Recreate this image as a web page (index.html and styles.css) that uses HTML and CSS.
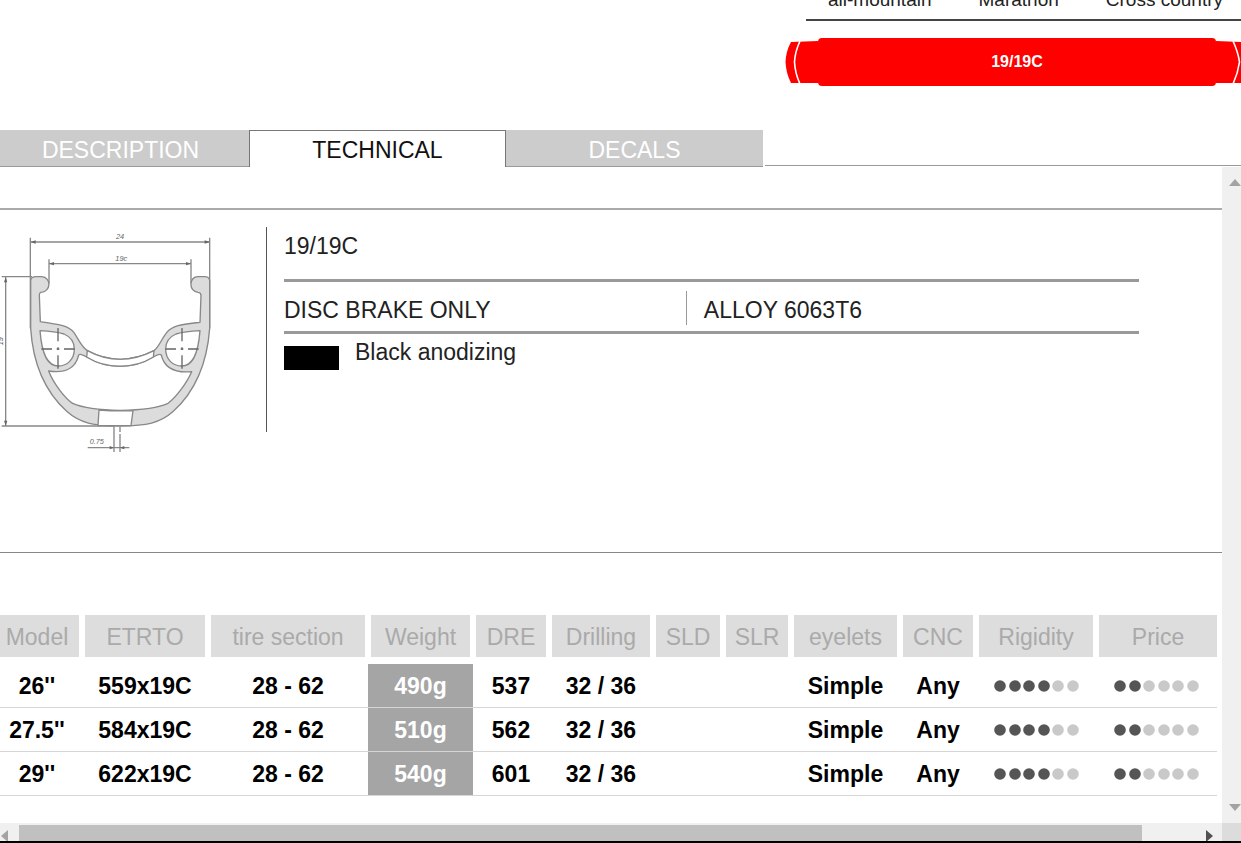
FILE: index.html
```html
<!DOCTYPE html>
<html lang="en">

<head>
    <meta charset="UTF-8">
    <meta name="viewport" content="width=device-width, initial-scale=1.0">
    <title>19/19C</title>
    <link rel="stylesheet" href="styles.css">
</head>

<body>
    <svg class="defs" width="0" height="0">
        <symbol id="score4" viewBox="0 0 85 12">
            <g fill="#555">
                <circle cx="6" cy="6" r="5.8" /><circle cx="21" cy="6" r="5.8" />
                <circle cx="35" cy="6" r="5.8" /><circle cx="50" cy="6" r="5.8" />
            </g>
            <g fill="#c9c9c9">
                <circle cx="64" cy="6" r="5.8" /><circle cx="79" cy="6" r="5.8" />
            </g>
        </symbol>
        <symbol id="score2" viewBox="0 0 85 12">
            <g fill="#555">
                <circle cx="6" cy="6" r="5.8" /><circle cx="21" cy="6" r="5.8" />
            </g>
            <g fill="#c9c9c9">
                <circle cx="35" cy="6" r="5.8" /><circle cx="50" cy="6" r="5.8" />
                <circle cx="64" cy="6" r="5.8" /><circle cx="79" cy="6" r="5.8" />
            </g>
        </symbol>
    </svg>

    <header class="header">
        <div class="usage">
            <div class="usage-labels">
                <span>all-mountain</span>
                <span>Marathon</span>
                <span>Cross country</span>
            </div>
            <div class="range">
                <svg class="range-end" width="33" height="43" viewBox="0 0 33 43">
                    <path d="M6 1L33 0V42L6 42Q1 32 0.500 21Q1 10 6 1Z" fill="#f00" />
                    <path d="M15 0Q10 11 9.500 21Q10 32 15 43" fill="none" stroke="#fff" stroke-width="1.6" />
                </svg>
                <div class="range-name">19/19C</div>
                <svg class="range-end" width="25" height="43" viewBox="0 0 25 43">
                    <path d="M0 0L25 1V42H0Z" fill="#f00" />
                    <path d="M17 0Q22 11 23.500 21Q22 32 17 43" fill="none" stroke="#fff" stroke-width="1.6" />
                </svg>
            </div>
        </div>
    </header>

    <nav class="tabs">
        <button class="tab">DESCRIPTION</button>
        <button class="tab active">TECHNICAL</button>
        <button class="tab">DECALS</button>
        <span class="tabs-line"></span>
    </nav>

    <main class="panel">
        <div class="panel-row">
            <div class="content">
                <section class="rim">
                    <svg class="rim-drawing" width="240" height="240" viewBox="0 3 720 720">
                        <!-- rim profile -->
                        <path fill="#dcdcdc" stroke="#888" stroke-width="4" stroke-linejoin="round" fill-rule="evenodd"
                            d="M92 180Q94 170 108 170H125C155 172 154 216 122 217Q118 218 118 226L121 305C170 313 205 315 222 338C240 365 244 380 262 392C325 426 395 426 462 392C478 380 482 360 500 338C518 315 550 313 600 307L603 226Q602 217 594 217C566 214 566 172 592 170H614Q628 170 629 182V325C622 420 590 510 520 574C480 610 440 617 360 618C280 617 240 610 200 574C130 510 98 420 92 325Z
                            M120 332Q165 334 192 342C215 352 223 368 223 387C223 418 202 438 175 438C145 438 126 410 120 332Z
                            M600 332Q555 334 528 342C505 352 497 368 497 387C497 418 518 438 545 438C575 438 594 410 600 332Z
                            M146 453C160 490 196 536 218 550C250 564 300 570 360 571C420 570 475 564 504 550C526 534 560 490 575 455C520 460 492 440 484 405Q478 399 460 411C400 448 320 448 260 411Q240 399 236 405C228 440 200 462 146 453Z" />
                        <path fill="#fff" stroke="#888" stroke-width="4" d="M262 392C325 426 395 426 462 392L460 411C400 448 320 448 260 411ZM297 570Q350 574 399 572L393 617H294Z" />
                        <!-- spoke centres -->
                        <g stroke="#666" stroke-width="4" fill="none">
                            <path d="M174 324V364M174 382V390M174 406V446M124 387H156M170 387H178M192 387H224" />
                            <path d="M546 324V364M546 382V390M546 406V446M496 387H528M542 387H550M564 387H596" />
                        </g>
                        <!-- dimension lines -->
                        <g stroke="#888" stroke-width="4" fill="none">
                            <path d="M91 53V325M629 53V325M147 118V190M573 118V190" />
                            <path d="M92 66H629M147 131H573M17 172V617M5 170H96M5 618H345" />
                            <path d="M342 620V696M360 620V636M360 642V696M263 683H388" />
                        </g>
                        <g fill="#666">
                            <path d="M92 66l15-5v10zM629 66l-15-5v10zM147 131l15-5v10zM573 131l-15-5v10zM17 172l-5 15h10zM17 617l-5-15h10zM342 683l-13-5v10zM360 683l13-5v10z" />
                        </g>
                        <g class="dimension">
                            <text x="348" y="57">24</text>
                            <text x="346" y="122">19c</text>
                            <text x="269" y="672">0.75</text>
                            <text x="8" y="376" transform="rotate(-90 8 376)">19</text>
                        </g>
                    </svg>
                    <div class="specs">
                        <h1 class="spec-name">19/19C</h1>
                        <div class="spec-pair">
                            <span class="spec-brake">DISC BRAKE ONLY</span>
                            <span class="spec-alloy">ALLOY 6063T6</span>
                        </div>
                        <div class="finish">
                            <span class="swatch"></span>
                            <span>Black anodizing</span>
                        </div>
                    </div>
                </section>

                <table class="models">
                    <colgroup>
                        <col class="col-model">
                        <col class="col-etrto">
                        <col class="col-tire">
                        <col class="col-weight">
                        <col class="col-dre">
                        <col class="col-drilling">
                        <col class="col-sld">
                        <col class="col-slr">
                        <col class="col-eyelets">
                        <col class="col-cnc">
                        <col class="col-rigidity">
                        <col class="col-price">
                    </colgroup>
                    <thead>
                        <tr>
                            <th>Model</th>
                            <th>ETRTO</th>
                            <th>tire section</th>
                            <th>Weight</th>
                            <th>DRE</th>
                            <th>Drilling</th>
                            <th>SLD</th>
                            <th>SLR</th>
                            <th>eyelets</th>
                            <th>CNC</th>
                            <th>Rigidity</th>
                            <th>Price</th>
                        </tr>
                    </thead>
                    <tbody>
                        <tr>
                            <td>26''</td>
                            <td>559x19C</td>
                            <td>28 - 62</td>
                            <td class="weight">490g</td>
                            <td>537</td>
                            <td>32 / 36</td>
                            <td></td>
                            <td></td>
                            <td>Simple</td>
                            <td>Any</td>
                            <td><svg class="score"><use href="#score4" /></svg></td>
                            <td><svg class="score"><use href="#score2" /></svg></td>
                        </tr>
                        <tr>
                            <td>27.5''</td>
                            <td>584x19C</td>
                            <td>28 - 62</td>
                            <td class="weight">510g</td>
                            <td>562</td>
                            <td>32 / 36</td>
                            <td></td>
                            <td></td>
                            <td>Simple</td>
                            <td>Any</td>
                            <td><svg class="score"><use href="#score4" /></svg></td>
                            <td><svg class="score"><use href="#score2" /></svg></td>
                        </tr>
                        <tr>
                            <td>29''</td>
                            <td>622x19C</td>
                            <td>28 - 62</td>
                            <td class="weight">540g</td>
                            <td>601</td>
                            <td>32 / 36</td>
                            <td></td>
                            <td></td>
                            <td>Simple</td>
                            <td>Any</td>
                            <td><svg class="score"><use href="#score4" /></svg></td>
                            <td><svg class="score"><use href="#score2" /></svg></td>
                        </tr>
                    </tbody>
                </table>
            </div>
            <div class="scroll-y">
                <svg width="12" height="7" viewBox="0 0 12 7"><path d="M0 7L6 0L12 7Z" fill="#a3a3a3" /></svg>
                <svg width="12" height="7" viewBox="0 0 12 7"><path d="M0 0L6 7L12 0Z" fill="#a3a3a3" /></svg>
            </div>
        </div>
        <div class="panel-foot">
            <div class="scroll-x">
                <svg width="19" height="18" viewBox="0 0 19 18"><path d="M8 7V19L1 13Z" fill="#a3a3a3" /></svg>
                <div class="thumb"></div>
                <svg width="19" height="18" viewBox="0 0 19 18"><path d="M3 7V19L10 13Z" fill="#505050" /></svg>
            </div>
            <div class="corner"></div>
        </div>
    </main>
</body>

</html>
```
FILE: styles.css
```css
* {
    box-sizing: border-box;
}

body {
    display: flex;
    flex-direction: column;
    height: 100vh;
    margin: 0;
    overflow: hidden;
    background-color: #fff;
    color: #222;
    font-family: "Liberation Sans", Arial, sans-serif;
    font-size: 23px;
    line-height: 26px;
    border-bottom: 2px solid #000;
}

svg {
    display: block;
    flex: none;
}

.defs {
    position: absolute;
}

/* header */
.header {
    display: flex;
    justify-content: flex-end;
    height: 130px;
    flex: none;
}

.usage {
    width: 456px;
}

.usage-labels {
    display: flex;
    align-items: flex-end;
    gap: 47px;
    height: 21px;
    margin-left: 21px;
    padding: 0 0 9px 22px;
    border-bottom: 2px solid #444;
    font-size: 19px;
    line-height: 20px;
    white-space: nowrap;
}

.range {
    display: flex;
    align-items: center;
    margin-top: 17px;
}

.range-name {
    flex: 1;
    height: 48px;
    border-radius: 4px;
    background-color: #f00;
    color: #fff;
    font-size: 16px;
    font-weight: bold;
    line-height: 48px;
    text-align: center;
}

/* tabs */
.tabs {
    display: flex;
    flex: none;
    height: 37px;
    margin-left: -8px;
}

.tab {
    width: 257px;
    height: 37px;
    padding: 4px 0 0;
    border: 0;
    border-bottom: 1px solid #999;
    background-color: #ccc;
    color: #fff;
    font: inherit;
}

.tab.active {
    padding-top: 2px;
    border: 1px solid #777;
    border-bottom: 0;
    background-color: #fff;
    color: #111;
}

.tabs-line {
    flex: 1;
    height: 36px;
    margin-left: 2px;
    border-bottom: 1px solid #999;
}

/* panel */
.panel {
    display: flex;
    flex-direction: column;
    flex: 1;
    min-height: 0;
}

.panel-row {
    display: flex;
    flex: 1;
    min-height: 0;
}

.content {
    flex: 1;
    min-width: 0;
    padding-top: 41px;
    overflow: hidden;
}

.rim {
    display: flex;
    align-items: flex-start;
    height: 345px;
    padding-top: 11px;
    border-top: 2px solid #aaa;
    border-bottom: 1px solid #888;
}

.dimension {
    fill: #666;
    font-size: 22px;
    font-style: italic;
}

.specs {
    flex: 1;
    height: 205px;
    margin: 6px 83px 0 26px;
    padding-left: 17px;
    border-left: 1px solid #555;
}

.spec-name {
    height: 55px;
    margin: 0;
    padding-top: 6px;
    border-bottom: 3px solid #999;
    font-size: 23px;
    font-weight: normal;
}

.spec-pair {
    display: flex;
    height: 52px;
    padding-top: 9px;
    border-bottom: 3px solid #999;
}

.spec-brake {
    width: 47%;
    height: 34px;
    padding-top: 6px;
}

.spec-alloy {
    height: 34px;
    padding: 6px 0 0 17px;
    border-left: 1px solid #999;
}

.finish {
    display: flex;
    gap: 16px;
    padding-top: 5px;
}

.swatch {
    width: 55px;
    height: 24px;
    margin-top: 7px;
    background-color: #000;
}

/* models table */
.models {
    width: calc(100% + 3px);
    margin: 62px 0 0 -8px;
    border-spacing: 0;
    table-layout: fixed;
    text-align: center;
    white-space: nowrap;
}

.models th {
    height: 49px;
    padding: 1px 0 0;
    border: solid #fff;
    border-width: 0 3px 7px;
    background-color: #ddd;
    color: #aaa;
    font-weight: normal;
}

.models th:last-child {
    border-right: 0;
}

.models td {
    height: 44px;
    padding: 0;
    border-bottom: 1px solid #d5d5d5;
    color: #000;
    font-weight: bold;
}

.models .weight {
    background-color: #a5a5a5;
    color: #fff;
}

.score {
    width: 85px;
    height: 12px;
    margin: 0 auto;
}

.col-model {
    width: 90px;
}

.col-etrto {
    width: 126px;
}

.col-tire {
    width: 160px;
}

.col-weight {
    width: 105px;
}

.col-dre {
    width: 76px;
}

.col-drilling {
    width: 104px;
}

.col-sld {
    width: 70px;
}

.col-slr {
    width: 68px;
}

.col-eyelets {
    width: 109px;
}

.col-cnc {
    width: 76px;
}

.col-rigidity {
    width: 120px;
}

.col-price {
    width: 121px;
}

/* scrollbars */
.scroll-y {
    display: flex;
    flex: none;
    flex-direction: column;
    align-items: flex-end;
    justify-content: space-between;
    width: 19px;
    padding: 12px 0;
    background-color: #f0f0f0;
}

.panel-foot {
    display: flex;
    flex: none;
    height: 18px;
}

.scroll-x {
    display: flex;
    flex: 1;
    background-color: #f0f0f0;
}

.thumb {
    flex: 1;
    margin: 2px 61px 0 0;
    background-color: #c0c0c0;
}

.corner {
    width: 19px;
    background-color: #dcdcdc;
}
```
